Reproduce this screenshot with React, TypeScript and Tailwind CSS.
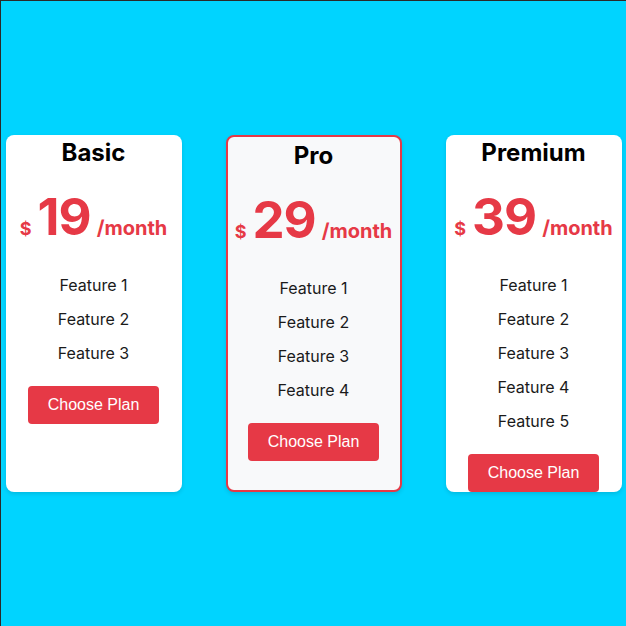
import type { ReactNode } from 'react';

type Plan = {
  name: string;
  price: number;
  features: string[];
  featured?: boolean;
};

const plans: Plan[] = [
  { name: 'Basic', price: 19, features: ['Feature 1', 'Feature 2', 'Feature 3'] },
  { name: 'Pro', price: 29, features: ['Feature 1', 'Feature 2', 'Feature 3', 'Feature 4'], featured: true },
  { name: 'Premium', price: 39, features: ['Feature 1', 'Feature 2', 'Feature 3', 'Feature 4', 'Feature 5'] },
];

function Card({ plan, children }: { plan: Plan; children: ReactNode }) {
  return (
    <div
      className={
        plan.featured
          ? 'w-[176px] h-[357px] rounded-lg border-2 border-[#e63946] bg-[#f8f9fa] pt-px text-center shadow-[0_2px_4px_rgba(0,0,0,0.12)]'
          : 'w-[176px] h-[357px] rounded-lg bg-white text-center shadow-[0_2px_4px_rgba(0,0,0,0.12)]'
      }
    >
      {children}
    </div>
  );
}

export default function App() {
  return (
    <div className="w-[626px] h-[626px] bg-[#00d4ff] border-t border-l border-[#2a2a2a] flex items-center justify-center gap-11 font-['Inter',sans-serif] text-[#1a1a1a]">
      {plans.map((plan) => (
        <Card key={plan.name} plan={plan}>
          <h2 className="text-2xl font-bold leading-9 text-black">{plan.name}</h2>

          {/* Price */}
          <div className="mt-5 leading-none text-[#e63946] font-bold whitespace-nowrap">
            <span className="text-lg">$</span>
            <span className="ml-[6px] mr-[6px] text-[51px] tracking-[-1px]">{plan.price}</span>
            <span className="text-xl">/month</span>
          </div>

          <ul className="mt-[30px] flex flex-col gap-2.5">
            {plan.features.map((f) => (
              <li key={f} className="text-base leading-6">{f}</li>
            ))}
          </ul>

          <button className="mt-[21px] px-5 py-2.5 rounded bg-[#e63946] text-white text-base leading-[18px] font-['Liberation_Sans',Arial,sans-serif]">
            Choose Plan
          </button>
        </Card>
      ))}
    </div>
  );
}
